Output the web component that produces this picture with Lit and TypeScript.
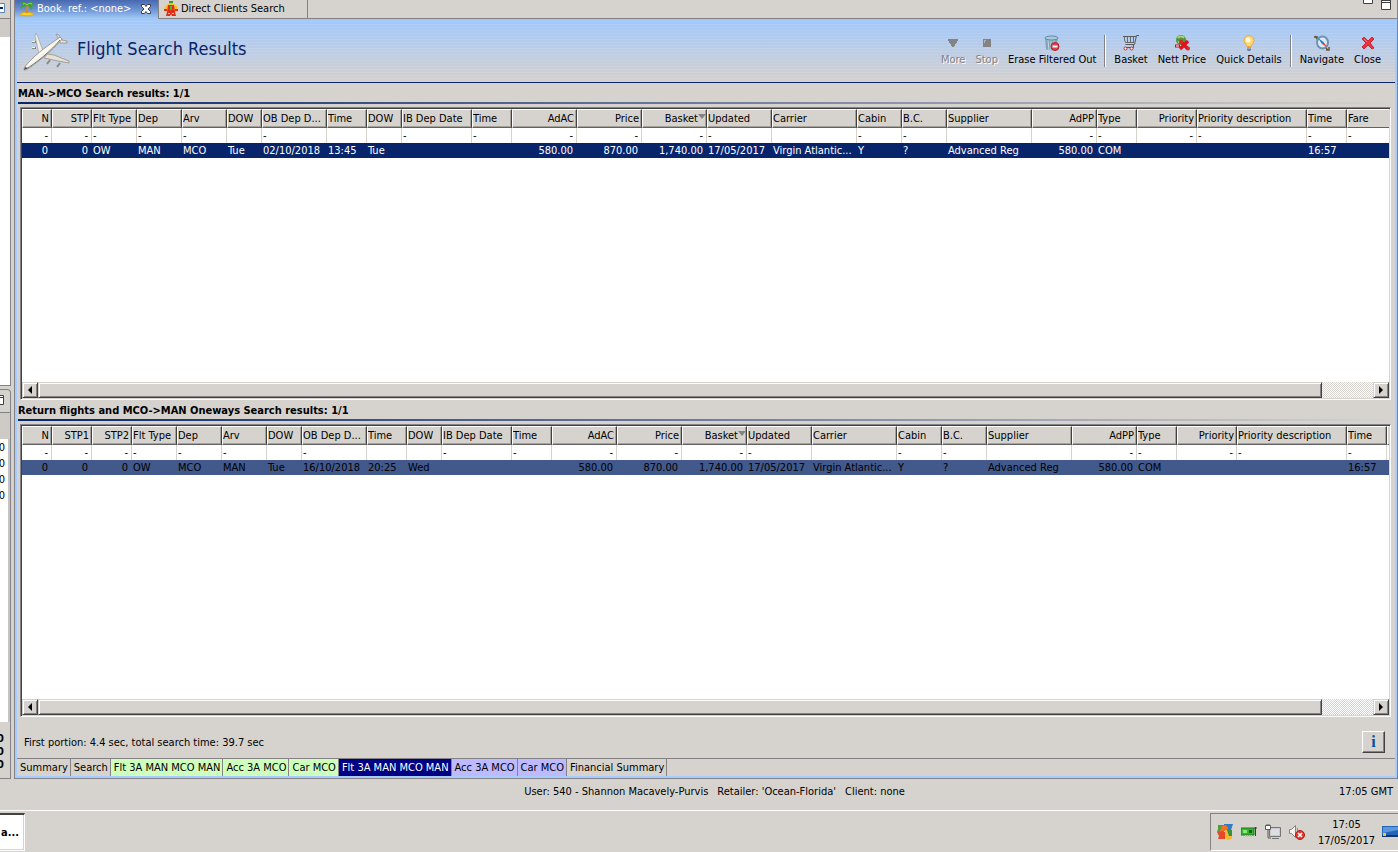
import { LitElement, html, css, svg, nothing } from "lit";
import { customElement, property } from "lit/decorators.js";
import { classMap } from "lit/directives/class-map.js";

type Column = {
  title: string;
  width?: number;
  right?: boolean;
  filter?: boolean;
  sorted?: boolean;
  value?: string;
};

const col = (title: string, width: number, value = "", opts: Partial<Column> = {}): Column => ({
  title,
  width,
  value,
  filter: true,
  ...opts,
});
const R = { right: true };
const NF = { filter: false };

const commonColumns = (dep: string, arv: string, date: string, time: string, ibDow: string): Column[] => [
  col("Flt Type", 45, "OW"),
  col("Dep", 45, dep),
  col("Arv", 45, arv),
  col("DOW", 35, "Tue", NF),
  col("OB Dep D...", 65, date),
  col("Time", 40, time, NF),
  col("DOW", 35, ibDow, NF),
  col("IB Dep Date", 70),
  col("Time", 40),
  col("AdAC", 65, "580.00", R),
  col("Price", 65, "870.00", R),
  col("Basket", 65, "1,740.00", { right: true, sorted: true }),
  col("Updated", 65, "17/05/2017"),
  col("Carrier", 85, "Virgin Atlantic...", NF),
  col("Cabin", 45, "Y"),
  col("B.C.", 45, "?"),
  col("Supplier", 85, "Advanced Reg", NF),
  col("AdPP", 65, "580.00", R),
  col("Type", 40, "COM"),
  col("Priority", 60, "", R),
  col("Priority description", 110),
  col("Time", 40, "16:57"),
];

const outbound: Column[] = [
  col("N", 30, "0", R),
  col("STP", 40, "0", R),
  ...commonColumns("MAN", "MCO", "02/10/2018", "13:45", "Tue"),
  { title: "Fare", filter: true, value: "" },
];

const inbound: Column[] = [
  col("N", 30, "0", R),
  col("STP1", 40, "0", R),
  col("STP2", 40, "0", R),
  ...commonColumns("MCO", "MAN", "16/10/2018", "20:25", "Wed"),
  { title: "", filter: false, value: "" },
];

const icons = {
  more: svg`<path d="M3 4h10v2h-1v2h-1v1h-1v2H9v1H7v-1H6V9H5V8H4V6H3z" fill="#848284"/>`,
  stop: svg`<path d="M4 4h8v8H4z" fill="#848284"/><path d="M5 5h2v1H6v2H5z" fill="#b5b2b5"/>`,
  erase: svg`<path d="M1 3l1 11c0 1 9 2 10 0l2-11z" fill="#7fa3b8"/><path d="M4 5l1 10M7 5v10M10 5l-1 6" stroke="#c3dbe6"/><ellipse cx="7.5" cy="3" rx="6.5" ry="2" fill="#a9cbd9" stroke="#5e8aa3"/><circle cx="11" cy="11.500" r="4" fill="#d9434b" stroke="#a8252d"/><path d="M8.500 11.500h5" stroke="#fff" stroke-width="2"/>`,
  basket: svg`<path d="M16 .5h-2.500l-2 9H2.500M0 1.500h13" fill="none" stroke="#5a5a5a"/><path d="M1.500 2v3l1 2.500h9M4.500 2v5M7.500 2v5M10.500 2v5" fill="none" stroke="#6b6b6b"/><path d="M10.500 9.500v3H3" fill="none" stroke="#d02028"/><circle cx="2.500" cy="13.500" r="1.500" fill="#fff" stroke="#d02028"/><circle cx="8.500" cy="13.500" r="1.500" fill="#fff" stroke="#d02028"/>`,
  nett: svg`<circle cx="7" cy="5" r="5" fill="#4f9638"/><path d="M4 3c1-2 5-2 6 0M4 7h5" fill="none" stroke="#a6d67e" stroke-width="2"/><path d="M1 11h5" stroke="#c8101c" stroke-width="3"/><path d="M2 11h3" stroke="#fff"/><path d="M6 6l8 8M14 6l-8 8" stroke="#dc1420" stroke-width="3.500"/><circle cx="7" cy="7" r="2" fill="#e8202c"/><circle cx="14" cy="13.500" r="2" fill="#e8202c"/>`,
  bulb: svg`<path d="M8 .5a5 5 0 0 0-5 5c0 3 2.500 3.500 3 6h4c.5-2.500 3-3 3-6a5 5 0 0 0-5-5z" fill="#ffd873" stroke="#f0a93a"/><circle cx="7" cy="5" r="2.500" fill="#fffbe0"/><path d="M6 12h4v3l-1 1H7l-1-1z" fill="#71809a"/><path d="M6 13h4" stroke="#c9d1dd"/>`,
  navigate: svg`<path d="M1 1l3 4M0 2h4M12 15h3v-3M11 12l3 3" fill="none" stroke="#6b5537" stroke-width="1.500"/><ellipse cx="8.500" cy="7.500" rx="5.500" ry="6" fill="#dcebf5" stroke="#6f94b3" stroke-width="2"/><path d="M4 3l5.500 4L8 9z" fill="#1b78c2"/><path d="M13 12L9.500 7 8 9z" fill="#e03030"/>`,
  close: svg`<path d="M2 4l2-2 4 4 4-4 2 2-4 4 4 5-2 1-4-4-4 4-2-2 4-4z" fill="#e8343c" stroke="#d0252c"/><path d="M4 4l3 3" stroke="#ff8b8b"/>`,
};

/** Table of flights: header, filter line, selected row and a horizontal scroll bar. */
@customElement("flight-grid")
class FlightGrid extends LitElement {
  @property({ attribute: false }) columns: Column[] = [];
  @property() label = "";
  @property({ type: Boolean }) inactive = false;
  @property({ type: Number }) thumb = 96;

  static styles = css`
    :host {
      display: flex;
      flex-direction: column;
      box-sizing: border-box;
      min-width: 0;
      min-height: 0;
      overflow: hidden;
      background: #fff;
      border: 1px solid;
      border-color: #848284 #fff #fff #848284;
      box-shadow: inset 1px 1px #424142, inset -1px -1px #d6d3ce;
      padding: 1px;
    }
    .body {
      flex: 1;
      min-height: 0;
      overflow: hidden;
    }
    table {
      width: 100%;
      table-layout: fixed;
      border-collapse: separate;
      border-spacing: 0;
    }
    th,
    td {
      box-sizing: border-box;
      padding: 0 4px 0 1px;
      font-weight: normal;
      text-align: left;
      white-space: nowrap;
      overflow: hidden;
      line-height: 14px;
    }
    th {
      height: 19px;
      padding: 1px 2px 0 0;
      line-height: 16px;
      background: #d6d3ce;
      border: 1px solid;
      border-color: #fff #424142 #636163 #fff;
      box-shadow: inset -1px -1px #a5a29c;
    }
    th:last-child {
      border-right: 0;
      box-shadow: none;
    }
    td {
      height: 15px;
    }
    .filter td {
      border-right: 1px solid #d6d3ce;
      padding-right: 3px;
    }
    .filter td:last-child {
      border-right: 0;
    }
    .selected td {
      background: #08246b;
      color: #fff;
    }
    .inactive td {
      background: #42598c;
      color: #000;
    }
    th.right,
    td.right {
      text-align: right;
    }
    th.sorted {
      padding-right: 0;
    }
    .arrow {
      width: 8px;
      height: 5px;
      vertical-align: 3px;
    }
    .scroll {
      display: flex;
      height: 16px;
      background: repeating-conic-gradient(#fff 0 25%, #d6d3ce 0 50%) 0 0 / 2px 2px;
    }
    .scroll button,
    .thumb {
      box-sizing: border-box;
      padding: 0;
      background: #d6d3ce;
      border: 1px solid;
      border-color: #d6d3ce #424142 #424142 #d6d3ce;
      box-shadow: inset 1px 1px #fff, inset -1px -1px #848284;
    }
    .scroll button {
      flex: none;
      display: flex;
      align-items: center;
      justify-content: center;
      width: 16px;
    }
    .track {
      flex: 1;
      display: flex;
    }
    .scroll svg {
      width: 4px;
      height: 8px;
    }
  `;

  render() {
    return html`
      <div class="body">
        <table aria-label=${this.label}>
          <colgroup>
            ${this.columns.map((c) =>
              c.width ? html`<col style="width:${c.width}px" />` : html`<col />`
            )}
          </colgroup>
          <thead>
            <tr>
              ${this.columns.map(
                (c) => html`<th scope="col" class=${classMap({ right: !!c.right, sorted: !!c.sorted })}>${c.title}${c.sorted
                  ? html`<svg class="arrow" viewBox="0 0 8 5"><path d="M0 0h8L4 5z" fill="#848284" /></svg>`
                  : nothing}</th>`
              )}
            </tr>
          </thead>
          <tbody>
            <tr class="filter">
              ${this.columns.map((c) => html`<td class=${classMap({ right: !!c.right })}>${c.filter ? "-" : ""}</td>`)}
            </tr>
            <tr class=${classMap({ selected: true, inactive: this.inactive })}>
              ${this.columns.map((c) => html`<td class=${classMap({ right: !!c.right })}>${c.value}</td>`)}
            </tr>
          </tbody>
        </table>
      </div>
      <div class="scroll">
        <button aria-label="Scroll left"><svg viewBox="0 0 4 8"><path d="M4 0v8L0 4z" /></svg></button>
        <div class="track"><div class="thumb" style="width:${this.thumb}%"></div></div>
        <button aria-label="Scroll right"><svg viewBox="0 0 4 8"><path d="M0 0v8l4-4z" /></svg></button>
      </div>
    `;
  }
}

@customElement("app-root")
class AppRoot extends LitElement {
  static styles = css`
    :host {
      display: flex;
      flex-direction: column;
      height: 100vh;
      overflow: hidden;
      background: #d6d3ce;
      color: #000;
      font-family: "DejaVu Sans Condensed", Tahoma, "DejaVu Sans", sans-serif;
      font-size: 11px;
      line-height: 14px;
    }
    button {
      font: inherit;
      color: inherit;
      border: 0;
      padding: 0;
      margin: 0;
      background: none;
      white-space: nowrap;
    }
    svg {
      display: block;
      flex: none;
    }
    .workspace {
      flex: 1;
      min-height: 0;
      display: flex;
      gap: 3px;
    }

    /* side views, mostly beyond the left edge */
    .side {
      flex: none;
      width: 11px;
      display: flex;
      flex-direction: column;
      gap: 3px;
    }
    .view {
      display: flex;
      flex-direction: column;
      border-right: 1px solid #848284;
      border-bottom: 1px solid #848284;
      overflow: hidden;
    }
    .view.top {
      flex: none;
      height: 385px;
    }
    .view.bottom {
      flex: 1;
      border-top: 1px solid #848284;
      border-top-right-radius: 4px;
    }
    .viewbar {
      flex: none;
      height: 18px;
      border-bottom: 1px solid #848284;
    }
    .bottom .viewbar {
      height: 22px;
    }
    .viewbar svg {
      width: 5px;
      height: 10px;
      margin-top: 3px;
    }
    .bottom .viewbar svg {
      margin-top: 5px;
    }
    .viewtools {
      flex: none;
      height: 18px;
      background: #cecbc6;
    }
    .bottom .viewtools {
      height: 26px;
    }
    .page {
      flex: 1;
      background: #fff;
    }
    .bottom .page {
      margin-right: 2px;
      box-shadow: 2px 0 #c6c3c6;
    }
    .cut {
      display: flex;
      justify-content: flex-end;
      width: 5px;
      height: 16px;
      line-height: 18px;
      overflow: hidden;
    }
    .totals {
      flex: none;
      box-sizing: border-box;
      height: 56px;
      padding-top: 10px;
    }
    .totals .cut {
      width: 4px;
      height: 13px;
      line-height: 14px;
      font-weight: bold;
    }

    /* editor */
    .editor {
      flex: 1;
      min-width: 0;
      display: flex;
      flex-direction: column;
      border: 1px solid #848284;
      border-top: 0;
    }
    .tabs {
      flex: none;
      display: flex;
      height: 19px;
      overflow: hidden;
    }
    .tab {
      display: flex;
      align-items: center;
      gap: 2px;
      height: 19px;
      box-sizing: border-box;
      padding: 0 0 2px 4px;
    }
    .tab svg {
      width: 16px;
      height: 16px;
    }
    .tab.active {
      width: 143px;
      color: #fff;
      background: linear-gradient(#4868b0, #6b92d3 50%, #a5cbf7);
    }
    .tab .x {
      display: flex;
      margin-left: auto;
      padding-right: 7px;
    }
    .tab .x svg {
      width: 10px;
      height: 10px;
    }
    .tab.other {
      width: 150px;
      border: 1px solid #848284;
      border-top: 0;
      padding-bottom: 1px;
    }
    .tabrest {
      flex: 1;
      display: flex;
      justify-content: flex-end;
      gap: 8px;
      padding-right: 6px;
      border-bottom: 1px solid #848284;
    }
    .tabrest svg {
      width: 10px;
      height: 10px;
    }
    .frame {
      flex: 1;
      min-height: 0;
      display: flex;
      flex-direction: column;
      border: 2px solid #a5cbff;
      border-top: 0;
    }
    .banner {
      flex: none;
      display: flex;
      align-items: center;
      box-sizing: border-box;
      height: 64px;
      padding: 0 14px 0 6px;
      border-bottom: 1px solid #08246b;
      background: repeating-linear-gradient(rgba(255, 255, 255, 0) 0 2px, rgba(255, 255, 255, 0.09) 2px 3px),
        linear-gradient(#a0c8fb, #bccde6 50%, #d4d0ce);
    }
    .plane {
      width: 48px;
      height: 42px;
    }
    h1 {
      flex: 1;
      margin: 0 0 4px 6px;
      font-size: 18px;
      line-height: 22px;
      font-weight: normal;
      color: #08246b;
      white-space: nowrap;
    }
    .toolbar {
      display: flex;
      gap: 10px;
      padding-top: 1px;
    }
    .tool {
      display: flex;
      flex-direction: column;
      align-items: center;
      gap: 2px;
    }
    .tool svg {
      width: 16px;
      height: 16px;
    }
    .tool:disabled {
      color: #848284;
      text-shadow: 1px 1px #fff;
    }
    .sep {
      width: 1px;
      background: #848284;
      border-right: 1px solid #fff;
      margin: 0 -2px;
    }
    .results {
      flex: 1;
      min-height: 0;
      display: grid;
      grid-template-rows: 24px minmax(0, 1fr) 24px minmax(0, 1fr);
      padding: 0 4px 0 1px;
    }
    flight-grid {
      margin-left: 2px;
    }
    h2 {
      margin: 0 0 3px;
      padding-top: 2px;
      font-size: 11px;
      line-height: 17px;
      font-weight: bold;
      border-bottom: 2px solid;
      border-image: linear-gradient(90deg, #08246b, #d6d3ce) 1;
      white-space: nowrap;
    }
    .info {
      flex: none;
      display: flex;
      align-items: center;
      justify-content: space-between;
      height: 41px;
      padding: 0 10px 0 7px;
      border-bottom: 1px solid #848284;
    }
    .info p {
      margin: 10px 0 0;
    }
    .info button {
      width: 23px;
      height: 22px;
      margin-top: 8px;
      font-family: "Liberation Serif", serif;
      font-size: 16px;
      line-height: 16px;
      font-weight: bold;
      color: #0051a5;
      border: 1px solid;
      border-color: #fff #424142 #424142 #fff;
      box-shadow: inset -1px -1px #848284;
    }
    .pages {
      flex: none;
      display: flex;
      height: 17px;
    }
    .pages button {
      padding: 0 2px 0 3px;
      border-right: 1px solid #848284;
    }
    .pages .green {
      background: #ceffbd;
    }
    .pages .violet {
      background: #bdbaff;
    }
    .pages .current {
      background: #000084;
      color: #fff;
    }

    /* status line and task bar */
    .status {
      flex: none;
      display: grid;
      grid-template-columns: 1fr auto 1fr;
      align-items: center;
      height: 31px;
      padding: 0 5px 6px 36px;
      box-sizing: border-box;
    }
    .who {
      display: flex;
      grid-column: 2;
      gap: 9px;
    }
    .time {
      justify-self: end;
    }
    .taskbar {
      flex: none;
      display: flex;
      justify-content: space-between;
      height: 42px;
      box-sizing: border-box;
      padding: 2px 0 1px;
      border-top: 1px solid #fff;
    }
    .task {
      width: 25px;
      text-align: left;
      padding-left: 1px;
      font-weight: bold;
      background: #fff;
      border-top: 2px solid #424142;
      border-right: 1px solid #fff;
      border-bottom: 1px solid #fff;
      box-shadow: inset -1px -1px #d6d3ce;
    }
    .tray {
      display: flex;
      align-items: center;
      gap: 8px;
      padding-left: 6px;
      border: 1px solid;
      border-color: #848284 #d6d3ce #fff #848284;
      border-right: 0;
    }
    .tray svg {
      width: 16px;
      height: 16px;
    }
    .clock {
      margin: 2px -1px 0 5px;
      text-align: center;
      line-height: 16px;
    }
  `;

  private tool(label: string, icon: unknown, disabled = false) {
    return html`<button class="tool" ?disabled=${disabled}>
      <svg viewBox="0 0 16 16">${icon}</svg><span>${label}</span>
    </button>`;
  }

  render() {
    return html`
      <div class="workspace">
        <div class="side">
          <div class="view top">
            <div class="viewbar">
              <svg viewBox="0 0 5 10"><path d="M0 .5h4.500v9H0" fill="#fff" stroke="#5a86b5" /><path d="M0 5h3" stroke="#08246b" stroke-width="2" /></svg>
            </div>
            <div class="viewtools"></div>
            <div class="page"></div>
          </div>
          <div class="view bottom">
            <div class="viewbar">
              <svg viewBox="0 0 5 10"><path d="M0 .5h3.500v9H0M0 2.500h3" fill="#fff" stroke="#424142" /></svg>
            </div>
            <div class="viewtools"></div>
            <div class="page">
              ${[0, 0, 0, 0].map((n) => html`<div class="cut"><span>${n}</span></div>`)}
            </div>
            <div class="totals">
              ${[0, 0, 0].map((n) => html`<div class="cut"><span>${n}</span></div>`)}
            </div>
          </div>
        </div>

        <main class="editor">
          <div class="tabs">
            <div class="tab active">
              <svg viewBox="0 0 16 16">
                <path d="M1 13c2-2 11-2 14 0-2 2.500-12 2.500-14 0z" fill="#ffd21f" stroke="#e8a800" />
                <path d="M8 12c-1-3 0-5 1-8" fill="none" stroke="#d08a2a" stroke-width="2" />
                <path d="M8 4C6 0 3 0 1 3c2-1 3 0 3 1-2 0-3 2-2 4 1-2 3-3 6-3 2 0 4 1 4 4 2-2 2-4 0-5 1-1 2 0 3 1 0-4-4-6-7-1z" fill="#3da61e" />
                <path d="M4 3c2-1 3 0 4 1 2-2 3-2 5-1" fill="none" stroke="#9be04a" />
              </svg>
              <span>Book. ref.: &lt;none&gt;</span>
              <button class="x" aria-label="Close tab">
                <svg viewBox="0 0 10 10"><path d="M.5.5h3L5 2.500 6.500.5h3v2L7 5l2.500 2.500v2h-3L5 7.500 3.500 9.500h-3v-2L3 5 .5 2.500z" fill="#fff" stroke="#424142" /></svg>
              </button>
            </div>
            <div class="tab other">
              <svg viewBox="0 0 16 16">
                <path d="M6 0h4v4H6z" fill="#f7b52c" />
                <path d="M6 0h4v2H6z" fill="#3e9b2f" />
                <path d="M2 5l3-2h6l3 2 1 4-2 2H3L1 9z" fill="#f9c22b" />
                <path d="M5 4h6l1 7H4z" fill="#e22d18" />
                <path d="M7 5h2v4H7z" fill="#55b03a" />
                <path d="M1 8h3v2H1zM12 8h3v2h-3z" fill="#e22d18" />
                <path d="M4 11h8l1 4H9l-1-2-1 2H3z" fill="#d9301a" />
                <path d="M5 12h2v1H5zM9 12h2v1H9z" fill="#ffcb2e" />
              </svg>
              <span>Direct Clients Search</span>
            </div>
            <div class="tabrest">
              <svg viewBox="0 0 10 10"><path d="M.5-1v4.500h9V-1" fill="#fff" stroke="#424142" /></svg>
              <svg viewBox="0 0 10 10"><path d="M.5-1v10.500h9V-1M.5 2.500h9M.5.5h9" fill="#fff" stroke="#424142" /></svg>
            </div>
          </div>

          <div class="frame">
            <header class="banner">
              <svg class="plane" viewBox="0 0 48 42">
                <path d="M13 3l2 4 5 14-4 3-4-18z" fill="#f2efe6" stroke="#a39e92" stroke-width=".7" />
                <path d="M24 24l7 1 15 6v2l-11-2-14-3z" fill="#e6e1d4" stroke="#8b8880" stroke-width=".7" />
                <path d="M36 10l-3-6 3 1 3 5 5 1v2l-7 0z" fill="#e6e1d4" stroke="#8b8880" stroke-width=".7" />
                <path d="M1 40c0-3 3-6 8-11C19 19 29 13 37 7l2 2C33 17 21 27 13 33c-5 4-9 7-12 7z" fill="#f6f3ea" stroke="#8b8880" stroke-width=".8" />
                <path d="M3 39c9-5 26-19 34-29" fill="none" stroke="#7a7770" />
                <path d="M5 35c8-8 17-15 25-20" fill="none" stroke="#fff" />
                <path d="M1 40l1-3 3 1z" fill="#504d4a" />
                <path d="M9 12h4M9 18h4M24 34l3-4M34 37l3-4" stroke="#8b8880" stroke-width="2" />
                <path d="M9 11.500h3M9 17.500h3" stroke="#f8f6ef" />
              </svg>
              <h1>Flight Search Results</h1>
              <div class="toolbar" role="toolbar">
                ${this.tool("More", icons.more, true)} ${this.tool("Stop", icons.stop, true)}
                ${this.tool("Erase Filtered Out", icons.erase)}
                <span class="sep"></span>
                ${this.tool("Basket", icons.basket)} ${this.tool("Nett Price", icons.nett)}
                ${this.tool("Quick Details", icons.bulb)}
                <span class="sep"></span>
                ${this.tool("Navigate", icons.navigate)} ${this.tool("Close", icons.close)}
              </div>
            </header>

            <section class="results">
              <h2>MAN-&gt;MCO Search results: 1/1</h2>
              <flight-grid label="Outbound flights" .columns=${outbound} .thumb=${96.2}></flight-grid>
              <h2>Return flights and MCO-&gt;MAN Oneways Search results: 1/1</h2>
              <flight-grid label="Return flights" .columns=${inbound} .thumb=${96.2} inactive></flight-grid>
            </section>

            <div class="info">
              <p>First portion: 4.4 sec, total search time: 39.7 sec</p>
              <button aria-label="Information">i</button>
            </div>
            <nav class="pages">
              <button>Summary</button>
              <button>Search</button>
              <button class="green">Flt 3A MAN MCO MAN</button>
              <button class="green">Acc 3A MCO</button>
              <button class="green">Car MCO</button>
              <button class="current">Flt 3A MAN MCO MAN</button>
              <button class="violet">Acc 3A MCO</button>
              <button class="violet">Car MCO</button>
              <button>Financial Summary</button>
            </nav>
          </div>
        </main>
      </div>

      <div class="status">
        <div class="who">
          <span>User: 540 - Shannon Macavely-Purvis</span>
          <span>Retailer: 'Ocean-Florida'</span>
          <span>Client: none</span>
        </div>
        <span class="time">17:05 GMT</span>
      </div>

      <footer class="taskbar">
        <button class="task">a...</button>
        <div class="tray">
          <svg viewBox="0 0 16 16">
            <path d="M1 1h6v7H0l1-3z" fill="#4f9e3a" /><path d="M7 0h9l-2 6H7z" fill="#2e7dc4" />
            <path d="M5 2c3-2 5-1 6 2l-1 3H3z" fill="#f0722a" /><path d="M0 8h8v7H1l1-3z" fill="#e5482a" />
            <path d="M8 6h7v9l-4 1-3-2z" fill="#f4b92e" /><path d="M10 6h5v6h-3z" fill="#3c8f3a" />
          </svg>
          <svg viewBox="0 0 16 16">
            <path d="M0 4h13v7H0z" fill="#35b52a" stroke="#1b7d14" /><path d="M2 6h4v3H2z" fill="#8ae67e" />
            <path d="M8 6h3v3H8z" fill="#1c5a16" /><path d="M4 12h8" stroke="#d8d12c" stroke-width="2" stroke-dasharray="1 1" />
            <path d="M14.500 3v9M13 4h3" stroke="#3a3a3a" />
          </svg>
          <svg viewBox="0 0 16 16">
            <path d="M4.500 3.500h11v9h-11z" fill="#c9cbd0" stroke="#747474" /><path d="M6 5h8v6H6z" fill="#dcdee2" />
            <path d="M7 14.500h7" stroke="#747474" /><path d="M.5 1.500h5v4h-5z" fill="#fff" stroke="#5a5a5a" />
            <path d="M3 5v9h3M2 0v2M4 0v2" fill="none" stroke="#5a5a5a" />
          </svg>
          <svg viewBox="0 0 16 16">
            <path d="M.5 5.500h2l4-4v12l-4-4h-2z" fill="#f4f4f4" stroke="#848284" /><path d="M8 4c1 1 1 6 0 7" fill="none" stroke="#848284" />
            <circle cx="11" cy="11" r="4.500" fill="#e03a32" stroke="#b01f18" /><path d="M9 9l4 4M13 9l-4 4" stroke="#fff" stroke-width="1.500" />
          </svg>
          <div class="clock">17:05<br />17/05/2017</div>
          <svg viewBox="0 0 16 16">
            <path d="M0 2h16v9H0z" fill="#2465b8" /><path d="M1 3h15v3L1 9z" fill="#5b97dc" />
            <path d="M0 11h16v2H0z" fill="#16376b" /><path d="M1 9h3v3H1z" fill="#f0c53a" />
          </svg>
        </div>
      </footer>
    `;
  }
}
